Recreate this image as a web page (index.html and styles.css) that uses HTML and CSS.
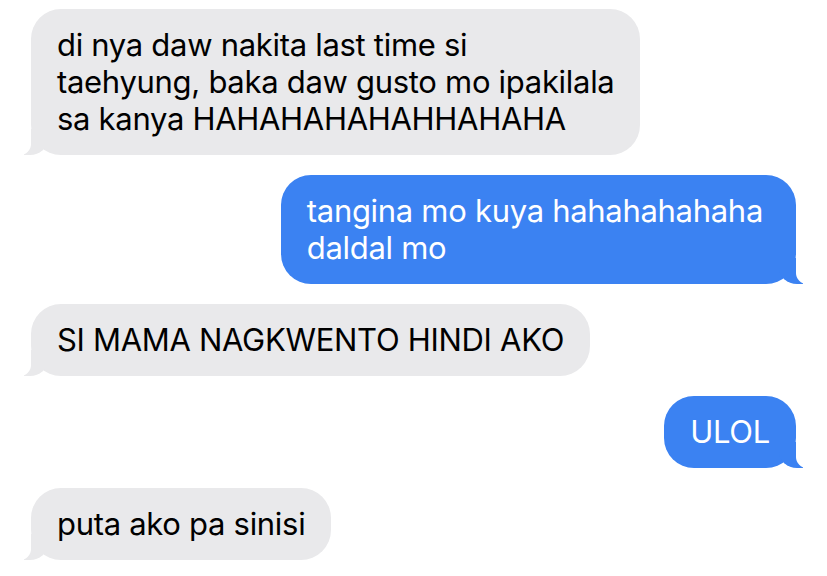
FILE: index.html
```html
<!DOCTYPE html>
<html lang="en">
<head>
  <meta charset="UTF-8" />
  <title>Messages</title>
  <link rel="stylesheet" href="styles.css">
</head>
<body>

  <div class="thread">
    <div class="bubble them">di nya daw nakita last time si<br>taehyung, baka daw gusto mo ipakilala<br>sa kanya HAHAHAHAHAHHAHAHA</div>
    <div class="bubble me wide">tangina mo kuya hahahahahaha<br>daldal mo</div>
    <div class="bubble them">SI MAMA NAGKWENTO HINDI AKO</div>
    <div class="bubble me">ULOL</div>
    <div class="bubble them">puta ako pa sinisi</div>
  </div>

</body>
</html>
```

FILE: styles.css
```css
body {
  font-family: Inter, 'Liberation Sans', sans-serif;
  background: #fff;
  margin: 0;
  padding: 0;
  color: #000;
}

.thread {
  display: flex;
  flex-direction: column;
  gap: 20px;
  padding: 9px 31px 0 31px;
}

.bubble {
  position: relative;
  width: fit-content;
  padding: 17px 26px 18px;
  border-radius: 30px;
  font-size: 31px;
  line-height: 37px;
  letter-spacing: -0.3px;
}

/* tails */
.bubble::before,
.bubble::after {
  content: "";
  position: absolute;
  bottom: 0;
  height: 26px;
}

.them {
  align-self: flex-start;
  background: #e9e9eb;
}

.them::before {
  left: -7px;
  width: 24px;
  background: #e9e9eb;
  border-bottom-right-radius: 18px 16px;
}

.them::after {
  left: -12px;
  width: 12px;
  background: #fff;
  border-bottom-right-radius: 11px;
}

.me {
  align-self: flex-end;
  background: #3b82f2;
  color: #fff;
}

.me.wide {
  padding-right: 33px;
}

.me::before {
  right: -7px;
  width: 24px;
  background: #3b82f2;
  border-bottom-left-radius: 18px 16px;
}

.me::after {
  right: -12px;
  width: 12px;
  background: #fff;
  border-bottom-left-radius: 11px;
}
```
